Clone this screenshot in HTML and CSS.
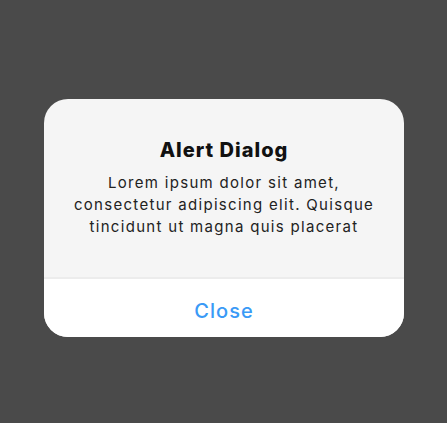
FILE: index.html
```html
<!DOCTYPE html>
<html>
<head>
<meta charset="utf-8">
<link rel="stylesheet" href="styles.css">
</head>
<body>
<div class="dialog">
  <div class="dialog-body">
    <h1 class="title">Alert Dialog</h1>
    <p class="message">Lorem ipsum dolor sit amet, consectetur adipiscing elit. Quisque tincidunt ut magna quis placerat</p>
  </div>
  <div class="dialog-actions">
    <button class="action">Close</button>
  </div>
</div>
</body>
</html>
```
FILE: styles.css
```css
html, body {
  margin: 0;
  padding: 0;
  height: 100%;
}
body {
  background: #4a4a4a;
  font-family: Inter, "Noto Sans", sans-serif;
}
.dialog {
  width: 360px;
  margin: 99px 0 0 44px;
  border-radius: 24px;
  overflow: hidden;
  background: #f5f5f5;
}
.dialog-body {
  height: 180px;
  box-sizing: border-box;
  padding: 38px 24px 0;
  text-align: center;
  border-bottom: 2px solid #ececec;
}
.title {
  margin: 0;
  font-size: 20px;
  font-weight: 800;
  line-height: 26px;
  color: #111;
  letter-spacing: 1px;
}
.message {
  margin: 9px 0 0;
  font-size: 15px;
  line-height: 22px;
  color: #222;
  letter-spacing: 1.3px;
}
.dialog-actions {
  height: 58px;
  box-sizing: border-box;
  padding-top: 5px;
  background: #fff;
  display: flex;
  align-items: center;
  justify-content: center;
}
.action {
  border: 0;
  background: none;
  font-family: inherit;
  font-size: 20px;
  font-weight: 500;
  color: #3a9af6;
  letter-spacing: 1px;
  padding: 0;
}
```
